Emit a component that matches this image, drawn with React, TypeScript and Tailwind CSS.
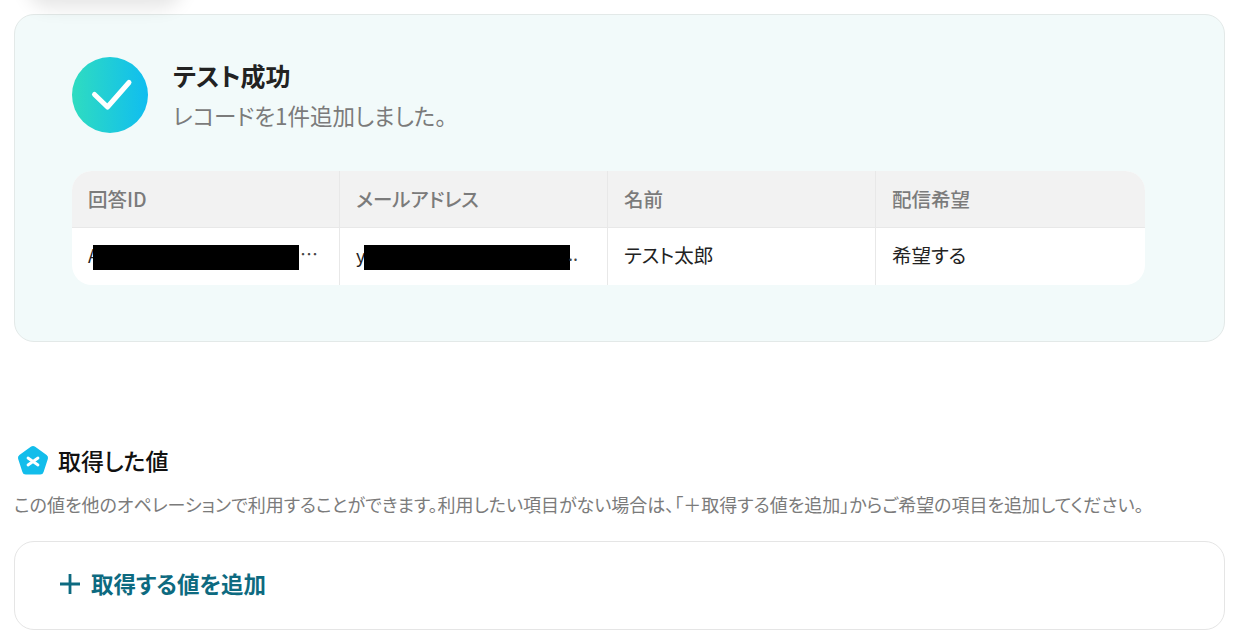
const font = "font-['Noto_Sans_CJK_JP','Noto_Sans',sans-serif] [font-feature-settings:'palt']";

function Cell({ children, className = '' }: { children: React.ReactNode; className?: string }) {
    return <div className={`flex items-center pl-4 ${className}`}>{children}</div>;
}

function Redacted({ first, tail, indent }: { first: string; tail: string; indent: string }) {
    return (
        <div className="relative w-full">
            <span className="text-[18px] text-[#222222]">{first}</span>
            <div className={`absolute top-[5px] h-[25px] w-[206px] bg-black ${indent}`} />
            <span className="absolute left-[212px] top-0 text-[18px] text-[#444444]">{tail}</span>
        </div>
    );
}

export default function App() {
    return (
        <div className={`relative h-[630px] w-[1238px] overflow-hidden bg-white px-[14px] pt-[14px] ${font}`}>
            {/* Shadow left over from the element above */}
            <div className="absolute left-[35px] top-[-30px] h-[30px] w-[140px] rounded-full shadow-[0_0_18px_8px_rgba(0,0,0,0.1)]" />

            {/* Result card */}
            <div className="h-[328px] w-[1211px] rounded-[20px] border border-[#e3e9e8] bg-[#f2fafa] pl-[57px] pt-[42px]">
                <div className="flex items-center gap-[25px]">
                    <svg viewBox="0 0 76 76" className="size-[76px]">
                        <defs>
                            <linearGradient id="check-bg" x1="0" y1="0" x2="1" y2="0">
                                <stop offset="0" stopColor="#2fdcc0" />
                                <stop offset="1" stopColor="#10bdf0" />
                            </linearGradient>
                        </defs>
                        <circle cx="38" cy="38" r="38" fill="url(#check-bg)" />
                        <path d="M22.5 37.5 L35.5 50 L57 25.5" fill="none" stroke="white" strokeWidth="5" strokeLinecap="round" strokeLinejoin="round" />
                    </svg>
                    <div className="mt-[-1px] flex flex-col gap-[6px]">
                        <p className="text-[25px] font-bold leading-[34px] text-[#222222]">テスト成功</p>
                        <p className="text-[22.5px] leading-[34px] text-[#7b7b7b]">レコードを1件追加しました。</p>
                    </div>
                </div>

                <div className="mt-[38px] w-[1073px] overflow-hidden rounded-[20px] bg-white">
                    <div className="grid h-[57px] grid-cols-[268px_268px_268px_269px] border-b border-[#e8e8e8] bg-[#f2f2f2] text-[19.5px] font-medium text-[#7b7b7b]">
                        <Cell className="border-r border-[#e8e8e8]">回答ID</Cell>
                        <Cell className="border-r border-[#e8e8e8]">メールアドレス</Cell>
                        <Cell className="border-r border-[#e8e8e8]">名前</Cell>
                        <Cell>配信希望</Cell>
                    </div>
                    <div className="grid h-[57px] grid-cols-[268px_268px_268px_269px] text-[19.5px] text-[#222222]">
                        <Cell className="border-r border-[#e8e8e8] pb-[4px]">
                            <Redacted first="A" tail="…" indent="left-[5px]" />
                        </Cell>
                        <Cell className="border-r border-[#e8e8e8] pb-[4px]">
                            <Redacted first="y" tail=".." indent="left-[8px]" />
                        </Cell>
                        <Cell className="border-r border-[#e8e8e8] pb-[4px]">テスト太郎</Cell>
                        <Cell className="pb-[4px]">希望する</Cell>
                    </div>
                </div>
            </div>

            {/* Fetched values */}
            <div className="mt-[102px] flex items-center gap-[9px] pl-[3px]">
                <svg viewBox="0 0 32 32" className="mt-[1px] size-[32px]">
                    <path d="M13.8 1.8 Q16 0.3 18.2 1.8 L29.6 10 Q31.6 11.5 30.9 13.8 L26.6 27 Q25.9 29.6 23.2 29.6 L8.8 29.6 Q6.1 29.6 5.4 27 L1.1 13.8 Q0.4 11.5 2.4 10 Z" fill="#12bdeb" />
                    <path d="M11 13 L21 20 M21 13 L11 20" stroke="white" strokeWidth="2.8" strokeLinecap="round" />
                </svg>
                <span className="mt-[-1px] text-[23px] font-medium text-[#111111]">取得した値</span>
            </div>
            <p className="mt-[12px] text-[18px] leading-[28px] text-[#7b7b7b]">
                この値を他のオペレーションで利用することができます。利用したい項目がない場合は、「＋取得する値を追加」からご希望の項目を追加してください。
            </p>
            <div className="mt-[23px] flex h-[89px] w-[1211px] items-center gap-[11px] rounded-[20px] border border-[#e5e5e5] bg-white pb-[2px] pl-[45px]">
                <svg viewBox="0 0 20 20" className="size-[20px]" stroke="#0d6a80" strokeWidth="2.8">
                    <path d="M10 0 V20 M0 10 H20" />
                </svg>
                <span className="text-[22.5px] font-bold text-[#0d6a80]">取得する値を追加</span>
            </div>
        </div>
    );
}
